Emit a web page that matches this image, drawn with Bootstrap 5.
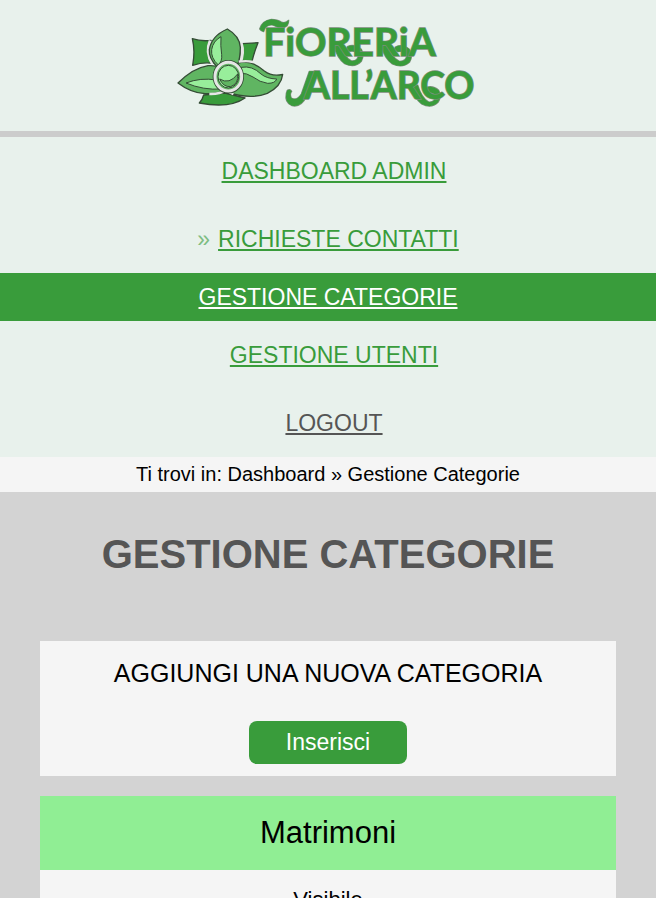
<!DOCTYPE html>
<html lang="it">
<head>
<meta charset="utf-8">
<meta name="viewport" content="width=device-width, initial-scale=1">
<title>Gestione Categorie - Fioreria all'Arco</title>
<link href="https://cdn.jsdelivr.net/npm/bootstrap@5.3.0/dist/css/bootstrap.min.css" rel="stylesheet">
<style>
  :root { --leaf: #399c3b; --mint: #e8f1ec; --panel: #f5f5f5; --slate: #555; }
  body { font-family: "Liberation Sans", Arial, sans-serif; color: #000; background: #d3d3d3; }
  .site-head { background: var(--mint); border-bottom: 6px solid #ccc; padding: 10px 0 16px; }
  .brand-logo { width: 314px; height: 105px; }
  .site-menu { background: var(--mint); font-size: 23px; line-height: 28px; }
  .site-menu .nav-item { padding: 20px 0 20px 12px; }
  .site-menu .nav-item.marked { padding-left: 0; }
  .site-menu .nav-item.current { padding: 10px 0; background: var(--leaf); }
  .site-menu a { color: var(--leaf); }
  .site-menu .current a { color: #fff; }
  .site-menu a.leave { color: var(--slate); }
  .marked::before { content: "»"; color: var(--leaf); opacity: .6; margin-right: 8px; }
  .crumbs { background: var(--panel); font-size: 20px; line-height: 35px; }
  .page-title { color: var(--slate); font-size: 40px; line-height: 48px; padding: 38px 0 63px; }
  .panel { background: var(--panel); }
  .panel-title { font-size: 25px; line-height: 32px; padding: 16px 0 32px; }
  .btn-leaf { --bs-btn-bg: var(--leaf); --bs-btn-color: #fff; --bs-btn-hover-bg: #2d7f2f; --bs-btn-hover-color: #fff;
    font-size: 23px; line-height: 27px; padding: 8px 37px; border: 0; border-radius: 8px; }
  .category-name { background: #90ee94; font-size: 31px; line-height: 74px; }
  .category-field { font-size: 22px; line-height: 28px; padding-top: 16px; }
  .word { font-family: Lato, sans-serif; font-weight: 700; fill: var(--leaf); stroke: #7d8f7d; stroke-width: 4; paint-order: stroke; }
</style>
</head>
<body>
<header class="site-head d-flex justify-content-center">
  <svg class="brand-logo" viewBox="3 0 942 315" role="img" aria-label="Fioreria all'Arco">
    <g stroke="#344c35" stroke-width="4" stroke-linejoin="round">
      <path fill="#399c3b" d="M67 86Q95 95 123 91L130 160Q100 155 68 166Q76 124 67 86Z"/>
      <path fill="#399c3b" d="M217 101L264 98Q253 125 246 154L209 153Z"/>
      <path fill="#399c3b" d="M101 255L165 249L225 264Q180 296 88 279Q98 268 101 255Z"/>
      <path fill="none" stroke="#e6e6e6" stroke-width="10" d="M121 92Q106 126 128 162M213 98Q223 128 209 160"/>
      <path fill="#60b562" d="M172 57Q209 78 211 112Q211 145 202 168L141 170Q116 145 118 119Q124 78 172 57Z"/>
      <path fill="#98ee9b" stroke-width="3" d="M153 80Q151 107 155 134Q157 154 145 165Q122 144 125 119Q129 93 153 80Z"/>
      <path fill="#60b562" d="M24 219Q70 174 114 167Q138 165 155 174L168 240Q141 252 105 251Q63 249 24 219Z"/>
      <path fill="#98ee9b" stroke-width="3" d="M48 219Q91 202 140 210L156 237Q100 241 48 219Z"/>
      <path fill="#60b562" d="M203 160Q243 147 283 183Q307 201 338 193Q334 229 292 250Q240 270 171 246Z"/>
      <path fill="#98ee9b" stroke-width="3" d="M214 172Q246 166 273 192Q290 206 320 207Q316 220 293 220Q270 217 249 201Q229 188 211 190Z"/>
      <path fill="none" stroke="#e6e6e6" stroke-width="7" d="M206 155Q230 151 250 156M118 252Q150 253 168 241L190 253"/>
      <ellipse cx="175" cy="200" rx="40" ry="43" fill="#60b562" stroke-width="14"/>
      <ellipse cx="175" cy="200" rx="40" ry="43" fill="#60b562" stroke="#e6e6e6" stroke-width="9"/>
      <ellipse cx="175" cy="200" rx="31" ry="34" fill="#98ee9b" stroke-width="3"/>
      <path fill="#60b562" stroke-width="3" d="M149 207Q178 225 203 192Q207 221 182 230Q159 231 149 207Z"/>
    </g>
    <g fill="#399c3b" stroke="#7d8f7d" stroke-width="4" stroke-linejoin="round" paint-order="stroke">
      <path d="M269 57Q276 32 304 28Q322 28 334 36Q346 41 356 31Q356 50 341 53Q326 55 308 45Q287 42 281 65Q273 64 269 57Z"/>
      <path d="M352 241Q360 236 365 244Q358 252 364 264Q380 274 394 252L418 184L438 184L410 258Q394 293 366 287Q343 277 349 250Z"/>
      <path d="M491 106L509 98Q522 143 545 153Q564 154 565 136Q560 121 540 124Q526 122 532 110Q553 100 574 118Q584 134 574 154Q555 175 524 161Q502 146 491 106Z"/>
      <path d="M632 106L650 98Q664 143 688 154Q708 155 710 137Q705 121 684 125Q669 121 676 111Q698 100 718 118Q730 136 719 156Q698 176 667 162Q644 146 632 106Z"/>
      <path d="M725 232L743 225Q755 265 776 276Q793 278 797 261Q792 246 772 248Q758 243 766 234Q787 224 806 241Q816 259 804 277Q784 297 755 282Q733 265 725 232Z"/>
    </g>
    <text class="word" x="280" y="138" font-size="117">FiORERiA</text>
    <text class="word" x="402" y="266" font-size="112">ALL’ARCO</text>
  </svg>
</header>
<nav class="site-menu" aria-label="Menu">
  <ul class="nav flex-column text-center text-uppercase">
    <li class="nav-item"><a href="#">Dashboard Admin</a></li>
    <li class="nav-item marked"><a href="#">Richieste Contatti</a></li>
    <li class="nav-item current"><a href="#" aria-current="page">Gestione Categorie</a></li>
    <li class="nav-item"><a href="#">Gestione Utenti</a></li>
    <li class="nav-item"><a class="leave" href="#">Logout</a></li>
  </ul>
</nav>
<p class="crumbs text-center mb-0">Ti trovi in: Dashboard » Gestione Categorie</p>
<main class="text-center">
  <h1 class="page-title fw-bold text-uppercase mb-0">Gestione Categorie</h1>
  <div class="d-grid gap-3 mx-4 px-3">
    <section class="panel pb-2 mb-1">
      <h2 class="panel-title fw-normal text-uppercase mb-0">Aggiungi una nuova categoria</h2>
      <button type="button" class="btn btn-leaf mb-1">Inserisci</button>
    </section>
    <section class="panel">
      <h2 class="category-name fw-normal mb-0">Matrimoni</h2>
      <p class="category-field mb-0">Visibile</p>
    </section>
  </div>
</main>
<script src="https://cdn.jsdelivr.net/npm/bootstrap@5.3.0/dist/js/bootstrap.bundle.min.js"></script>
</body>
</html>
